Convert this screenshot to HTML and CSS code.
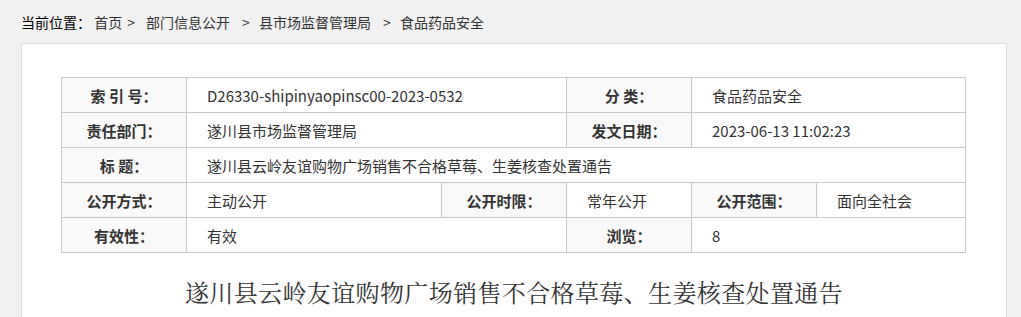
FILE: index.html
```html
<!DOCTYPE html>
<html lang="zh-CN">
<head>
    <meta charset="UTF-8">
    <meta name="viewport" content="width=device-width, initial-scale=1.0">
    <title>食品药品安全 - 遂川县市场监督管理局</title>
    <link rel="stylesheet" href="styles.css">
</head>
<body>
    <!-- 当前位置 -->
    <div class="crumbs">
        <span class="crumbs-title">当前位置：</span>
        <a href="#">首页</a><span class="sep first">&gt;</span>
        <a href="#">部门信息公开</a><span class="sep">&gt;</span>
        <a href="#">县市场监督管理局</a><span class="sep">&gt;</span>
        <a href="#">食品药品安全</a>
    </div>

    <!-- 正文 -->
    <div class="panel">
        <table class="meta">
            <colgroup>
                <col style="width:125px">
                <col style="width:255px">
                <col style="width:125px">
                <col style="width:125px">
                <col style="width:125px">
                <col>
            </colgroup>
            <tr>
                <th>索 引 号：</th>
                <td colspan="2">D26330-shipinyaopinsc00-2023-0532</td>
                <th>分 类：</th>
                <td colspan="2">食品药品安全</td>
            </tr>
            <tr>
                <th>责任部门：</th>
                <td colspan="2">遂川县市场监督管理局</td>
                <th>发文日期：</th>
                <td colspan="2">2023-06-13 11:02:23</td>
            </tr>
            <tr>
                <th>标 题：</th>
                <td colspan="5">遂川县云岭友谊购物广场销售不合格草莓、生姜核查处置通告</td>
            </tr>
            <tr>
                <th>公开方式：</th>
                <td>主动公开</td>
                <th>公开时限：</th>
                <td>常年公开</td>
                <th>公开范围：</th>
                <td>面向全社会</td>
            </tr>
            <tr>
                <th>有效性：</th>
                <td colspan="2">有效</td>
                <th>浏览：</th>
                <td colspan="2">8</td>
            </tr>
        </table>

        <h1 class="article-title">遂川县云岭友谊购物广场销售不合格草莓、生姜核查处置通告</h1>
    </div>
</body>
</html>
```

FILE: styles.css
```css
/* 通用 */
body {
    margin: 0;
    font-family: "Noto Sans CJK SC", "Liberation Sans", sans-serif;
    background-color: #f1f1f1;
    color: #333333;
}

a {
    color: #333333;
    text-decoration: none;
}

/* 当前位置 */
.crumbs {
    height: 43px;
    line-height: 44px;
    padding-left: 21px;
    font-size: 14px;
    box-sizing: border-box;
}

.crumbs-title {
    color: #000000;
}

.crumbs .sep {
    margin: 0 6px 0 12px;
}

.crumbs .sep.first {
    margin: 0 8px 0 5px;
}

/* 内容区 */
.panel {
    margin-left: 21px;
    width: 986px;
    box-sizing: border-box;
    background-color: #ffffff;
    border: 1px solid #dddddd;
    border-bottom: none;
    padding: 33px 39px 0;
    min-height: 274px;
}

/* 信息表 */
.meta {
    width: 905px;
    border-collapse: collapse;
    table-layout: fixed;
    font-size: 15px;
}

.meta th,
.meta td {
    border: 1px solid #c8c8c8;
    height: 35px;
    padding: 0 20px;
    box-sizing: border-box;
    white-space: nowrap;
}

.meta th {
    background-color: #f9f9f9;
    font-weight: bold;
    text-align: center;
    padding: 0;
    color: #333333;
}

.meta td {
    text-align: left;
    color: #333333;
}

/* 标题 */
.article-title {
    margin: 21px 0 0;
    font-family: "Noto Serif CJK SC", "Liberation Serif", serif;
    font-size: 24px;
    font-weight: normal;
    letter-spacing: 0.37px;
    line-height: 36px;
    text-align: center;
    color: #333333;
}
```
